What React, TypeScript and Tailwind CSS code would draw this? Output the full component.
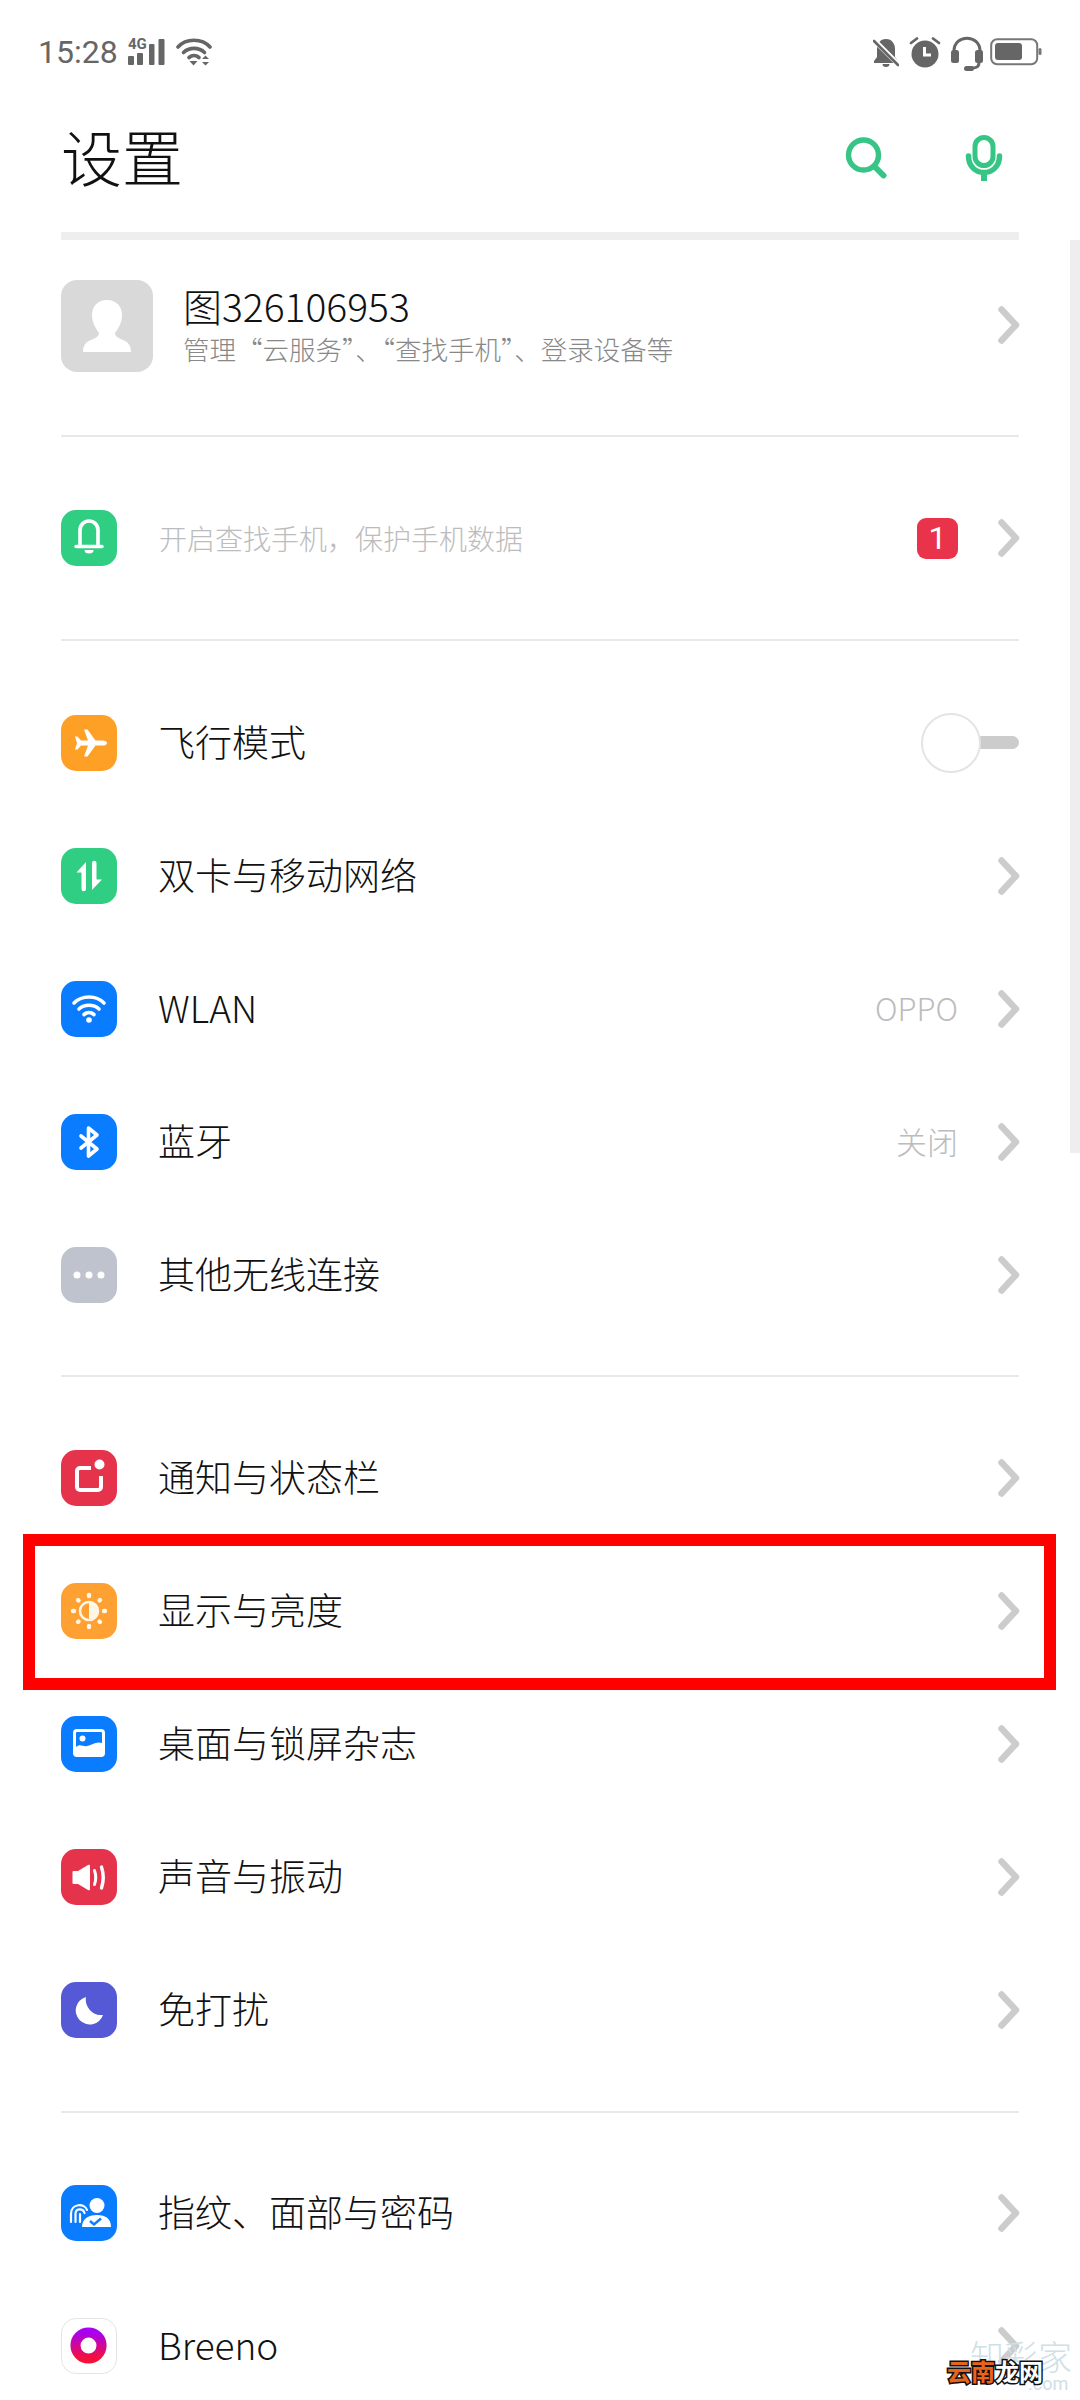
import React from "react";

const CJK = "font-['Noto_Sans_CJK_SC','Noto_Sans',sans-serif]";

function Chevron() {
  return (
    <svg width="22" height="38" viewBox="0 0 22 38" className="shrink-0 -mr-px">
      <path d="M3.5 3.5 L18 19 L3.5 34.5" fill="none" stroke="#cccccc" strokeWidth="6.5" strokeLinecap="round" strokeLinejoin="round" />
    </svg>
  );
}

function Box({ color, children, border }: { color: string; children: React.ReactNode; border?: boolean }) {
  return (
    <div
      className={`w-14 h-14 rounded-[15px] shrink-0 ${border ? "border border-[#e4e4e4]" : ""}`}
      style={{ backgroundColor: color }}
    >
      <svg width={border ? 54 : 56} height={border ? 54 : 56} viewBox="0 0 56 56" className="block">
        {children}
      </svg>
    </div>
  );
}

function Row({
  icon,
  label,
  value,
  toggle,
}: {
  icon: React.ReactNode;
  label: string;
  value?: string;
  toggle?: boolean;
}) {
  return (
    <div className="h-[133px] flex items-center">
      {icon}
      <div className="ml-[41px] pb-[3px] flex-1 text-[37px] leading-none text-[#111] font-light">{label}</div>
      {value ? <div className="mr-[40px] pb-[2px] text-[31px] leading-none text-[#bcbcbc] font-light">{value}</div> : null}
      {toggle ? (
        <div className="relative w-[98px] h-[60px] flex items-center justify-end">
          <div className="w-[50px] h-[13px] bg-[#cccccc] rounded-r-full" />
          <div className="absolute left-0 top-0 w-[60px] h-[60px] rounded-full bg-white border-2 border-[#e4e4e4]" />
        </div>
      ) : (
        <Chevron />
      )}
    </div>
  );
}

const W = "#ffffff";

export default function App() {
  return (
    <div className={`relative w-[1080px] h-[2400px] overflow-hidden bg-white ${CJK}`}>
      {/* status bar */}
      <div className="h-[104px] pl-[38px] pr-[38px] flex items-center justify-between">
        <div className="flex items-center">
          <span className="font-['Roboto',sans-serif] text-[32px] leading-[40px] text-[#666]">15:28</span>
          <svg width="38" height="28" viewBox="0 0 38 28" className="ml-[10px]">
            <text x="0" y="11" fontFamily="Roboto, sans-serif" fontWeight="700" fontSize="15" fill="#666">4G</text>
            <rect x="0" y="18" width="6" height="9" rx="1" fill="#666" />
            <rect x="9" y="15" width="6" height="12" rx="1" fill="#666" />
            <rect x="21" y="6" width="5.5" height="21" rx="1" fill="#666" />
            <rect x="30.5" y="1" width="6" height="26" rx="1" fill="#666" />
          </svg>
          <svg width="36" height="30" viewBox="0 0 36 30" className="ml-[10px]">
            <path d="M2 10 C10 1 26 1 34 10" fill="none" stroke="#666" strokeWidth="3.6" strokeLinecap="round" />
            <path d="M7.5 15.5 C13 10 23 10 28.5 15.5" fill="none" stroke="#666" strokeWidth="3.6" strokeLinecap="round" />
            <path d="M13 20.5 C16 18 20 18 23 20.5" fill="none" stroke="#666" strokeWidth="3.6" strokeLinecap="round" />
            <path d="M13.5 24 h8 l-4 4.5 Z" fill="#666" />
            <path d="M26 22 l3.5 -3.5 l3.5 3.5 Z M26 25 h7 l-3.5 3.5 Z" fill="#666" />
          </svg>
        </div>
        <div className="flex items-center">
          <svg width="26" height="32" viewBox="0 0 26 32">
            <path d="M13 3 C19 3 22 8 22 13 V21 L25 25 V27 H1 V25 L4 21 V13 C4 8 7 3 13 3 Z M9.5 28 h7 a3.5 3 0 0 1 -7 0 Z" fill="#666" />
            <path d="M1 4 L26 29" stroke="#fff" strokeWidth="5" />
            <path d="M1 5 L25 29" stroke="#666" strokeWidth="2.6" strokeLinecap="round" />
          </svg>
          <svg width="32" height="32" viewBox="0 0 32 32" className="ml-[10px]">
            <circle cx="16" cy="18" r="13.5" fill="#666" />
            <path d="M15.5 11 V19 H22" fill="none" stroke="#fff" strokeWidth="3" />
            <path d="M2 7 L8 2.5 M30 7 L24 2.5" stroke="#666" strokeWidth="2.8" strokeLinecap="round" />
          </svg>
          <svg width="34" height="38" viewBox="0 0 34 38" className="ml-[9px] mt-[4px]">
            <path d="M4 20 V16 C4 -1 30 -1 30 16 V20" fill="none" stroke="#666" strokeWidth="3" />
            <rect x="1" y="15" width="8" height="13" rx="2.5" fill="#666" />
            <rect x="25" y="15" width="8" height="13" rx="2.5" fill="#666" />
            <path d="M29 27 C29 32 27 33 21 33" fill="none" stroke="#666" strokeWidth="3" />
            <rect x="14" y="31" width="10" height="5" rx="2.5" fill="#666" />
          </svg>
          <svg width="52" height="28" viewBox="0 0 52 28" className="ml-[6px]">
            <rect x="1.2" y="1.2" width="46" height="25" rx="6" fill="none" stroke="#777" strokeWidth="2" />
            <rect x="5" y="5" width="27" height="17" rx="3" fill="#666" />
            <rect x="48.5" y="10" width="3" height="7" rx="1.5" fill="#777" />
          </svg>
        </div>
      </div>

      {/* header */}
      <div className="h-[128px] pb-[20px] pl-[61px] pr-[77px] flex items-center justify-between">
        <h1 className="text-[61px] leading-none font-light text-[#111] pb-[5px]">设置</h1>
        <div className="flex items-center gap-[78px]">
          <svg width="42" height="44" viewBox="0 0 42 44">
            <circle cx="18.5" cy="19" r="15" fill="none" stroke="#36c585" strokeWidth="5.4" />
            <path d="M30 31 L38.5 39.5" stroke="#36c585" strokeWidth="6" strokeLinecap="round" />
          </svg>
          <svg width="38" height="46" viewBox="0 0 38 46">
            <rect x="10" y="2.5" width="18" height="28" rx="9" fill="none" stroke="#36c585" strokeWidth="5" />
            <path d="M3.5 21 C3.5 43 34.5 43 34.5 21" fill="none" stroke="#36c585" strokeWidth="5.5" strokeLinecap="round" />
            <rect x="16" y="36" width="6" height="10" fill="#36c585" />
          </svg>
        </div>
      </div>

      <div className="ml-[61px] w-[958px]">
        <div className="h-2 bg-[#eeeeee]" />

        {/* account */}
        <div className="h-[195px] pt-[40px] flex items-start">
          <div className="w-[92px] h-[92px] rounded-[16px] bg-[#d9d9d9] shrink-0">
            <svg width="92" height="92" viewBox="-2 0 92 92" className="block">
              <path
                d="M44 20 C54 20 59 27 59 35 C59 44 54 50 52 53 C52 56 55 58 60 60 C65 62 68 65 68 72 H20 C20 65 23 62 28 60 C33 58 36 56 36 53 C34 50 29 44 29 35 C29 27 34 20 44 20 Z"
                fill="#fff"
              />
            </svg>
          </div>
          <div className="ml-[30px] flex-1 pt-[5px]">
            <div className="text-[39px] leading-[40px] font-light text-[#111]">图326106953</div>
            <div className="mt-[8px] text-[26.5px] leading-[32px] font-light text-[#888]">管理“云服务”、“查找手机”、登录设备等</div>
          </div>
          <div className="mt-[26px]">
            <Chevron />
          </div>
        </div>
        <div className="h-[2px] bg-[#e8e8e8]" />

        {/* reminder */}
        <div className="h-[202px] flex items-center">
          <Box color="#2fce83">
            <path d="M19 36 V20 a9 9 0 0 1 18 0 V36" fill="none" stroke={W} strokeWidth="3.6" />
            <path d="M15 36.5 H41" stroke={W} strokeWidth="3.4" strokeLinecap="round" />
            <path d="M23.5 40 h9 a4.5 3.5 0 0 1 -9 0 Z" fill={W} />
          </Box>
          <div className="ml-[42px] pb-[1px] flex-1 text-[28px] leading-none font-light text-[#bcbcbc]">开启查找手机，保护手机数据</div>
          <div className="w-[41px] h-[41px] rounded-[9px] bg-[#e8334a] text-white text-[32px] font-['Roboto',sans-serif] flex items-center justify-center mr-[40px]">1</div>
          <Chevron />
        </div>
        <div className="h-[2px] bg-[#e8e8e8]" />

        {/* connections */}
        <div className="pt-[35px] pb-[34px]">
          <Row
            label="飞行模式"
            toggle
            icon={
              <Box color="#ffa026">
                <path
                  d="M46 28 c0 1.5 -2 2.6 -4 2.6 H34.5 L26.5 41.5 h-3.5 L27 30.6 H20 L16.5 34.5 H14 L16 28 L14 21.5 H16.5 L20 25.4 H27 L23 14.5 h3.5 L34.5 25.4 H42 c2 0 4 1.1 4 2.6 Z"
                  fill={W}
                />
              </Box>
            }
          />
          <Row
            label="双卡与移动网络"
            icon={
              <Box color="#2fce83">
                <path d="M25 14 V41 a2 2 0 0 1 -4.5 0 V24.5 H15.5 Z" fill={W} />
                <path d="M31 42 V15 a2 2 0 0 1 4.5 0 V31.5 H41 Z" fill={W} />
              </Box>
            }
          />
          <Row
            label="WLAN"
            value="OPPO"
            icon={
              <Box color="#0a7cff">
                <path d="M13 22 C21 14 35 14 43 22" fill="none" stroke={W} strokeWidth="3.6" strokeLinecap="round" />
                <path d="M18 28 C23.5 23 32.5 23 38 28" fill="none" stroke={W} strokeWidth="3.6" strokeLinecap="round" />
                <path d="M23 33.5 C26 31 30 31 33 33.5" fill="none" stroke={W} strokeWidth="3.6" strokeLinecap="round" />
                <circle cx="28" cy="39" r="2.8" fill={W} />
              </Box>
            }
          />
          <Row
            label="蓝牙"
            value="关闭"
            icon={
              <Box color="#0a7cff">
                <path d="M20 22 L36 35 L27.5 42 V14 L36 21 L20 34" fill="none" stroke={W} strokeWidth="3.6" strokeLinecap="round" strokeLinejoin="round" />
              </Box>
            }
          />
          <Row
            label="其他无线连接"
            icon={
              <Box color="#bfc3cd">
                <circle cx="16" cy="28" r="3.5" fill={W} />
                <circle cx="28" cy="28" r="3.5" fill={W} />
                <circle cx="40" cy="28" r="3.5" fill={W} />
              </Box>
            }
          />
        </div>
        <div className="h-[2px] bg-[#e8e8e8]" />

        {/* device */}
        <div className="pt-[34px] pb-[35px]">
          <Row
            label="通知与状态栏"
            icon={
              <Box color="#e5334b">
                <path d="M30 18 H19 a3 3 0 0 0 -3 3 V37 a3 3 0 0 0 3 3 H37 a3 3 0 0 0 3 -3 V26" fill="none" stroke={W} strokeWidth="4" />
                <circle cx="38.5" cy="14.5" r="5" fill={W} />
              </Box>
            }
          />
          <Row
            label="显示与亮度"
            icon={
              <Box color="#ffa033">
                <circle cx="28" cy="28" r="9" fill="none" stroke="#fff6e5" strokeWidth="2.6" />
                <path d="M28 19 a9 9 0 0 1 0 18 Z" fill="#fff6e5" />
                <g stroke="#fff6e5" strokeWidth="4.4" strokeLinecap="round">
                  <path d="M28 12 V13" />
                  <path d="M28 43 V44" />
                  <path d="M12 28 H13" />
                  <path d="M43 28 H44" />
                  <path d="M17 17 L17.5 17.5" />
                  <path d="M39 17 L38.5 17.5" />
                  <path d="M17 39 L17.5 38.5" />
                  <path d="M39 39 L38.5 38.5" />
                </g>
              </Box>
            }
          />
          <Row
            label="桌面与锁屏杂志"
            icon={
              <Box color="#0a7cff">
                <rect x="12" y="13" width="32" height="28" rx="4" fill={W} />
                <path d="M15 17 a1 1 0 0 1 1 -1 H40 a1 1 0 0 1 1 1 V27 C35 25 31 29 26 30 C22 31 19 27 15 31 Z" fill="#0a7cff" />
                <circle cx="21.5" cy="22.5" r="3" fill={W} />
              </Box>
            }
          />
          <Row
            label="声音与振动"
            icon={
              <Box color="#e5334b">
                <path d="M11.5 23 a1 1 0 0 1 1 -1 H17 L27 16 a1.2 1.2 0 0 1 2 1 V40 a1.2 1.2 0 0 1 -2 1 L17 35 H12.5 a1 1 0 0 1 -1 -1 Z" fill={W} />
                <path d="M33.5 21.5 Q36 28.5 33.5 35.5" fill="none" stroke={W} strokeWidth="3" strokeLinecap="round" />
                <path d="M40.5 18 Q44 28.5 40.5 39" fill="none" stroke={W} strokeWidth="3.4" strokeLinecap="round" />
              </Box>
            }
          />
          <Row
            label="免打扰"
            icon={
              <Box color="#5659d6">
                <path d="M25 15 A14 14 0 1 0 42 33 A15.5 15.5 0 0 1 25 15 Z" fill={W} />
              </Box>
            }
          />
        </div>
        <div className="h-[2px] bg-[#e8e8e8]" />

        {/* security */}
        <div className="pt-[33px]">
          <Row
            label="指纹、面部与密码"
            icon={
              <Box color="#0a7cff">
                <circle cx="36" cy="20.5" r="7.5" fill={W} />
                <path d="M21 42 C21 34 27 30 36 30 C45 30 50 34 50 42 Z" fill={W} />
                <path d="M29 36 L33 39.5 L40 33.5" fill="none" stroke="#0a7cff" strokeWidth="2.4" />
                <g fill="none" stroke={W} strokeWidth="2.2" strokeLinecap="round">
                  <path d="M10 37 V29 C10 18 24 18 26 25" />
                  <path d="M14.5 37 V29 C14.5 23 22 23 23.5 28" />
                  <path d="M19 37 V29" />
                </g>
              </Box>
            }
          />
          <Row
            label="Breeno"
            icon={
              <Box color="#ffffff" border>
                <defs>
                  <linearGradient id="breeno" x1="0" y1="0" x2="0" y2="1">
                    <stop offset="0" stopColor="#a800f0" />
                    <stop offset="1" stopColor="#f5103a" />
                  </linearGradient>
                </defs>
                <circle cx="27.5" cy="27.5" r="13.5" fill="none" stroke="url(#breeno)" strokeWidth="10.5" />
              </Box>
            }
          />
        </div>
      </div>

      {/* scrollbar */}
      <div className="absolute left-[1070px] top-[240px] w-[10px] h-[913px] bg-[#eeeeee]" />

      {/* red highlight */}
      <div className="absolute left-[23px] top-[1534px] w-[1033px] h-[156px] border-[12px] border-[#fe0000]" />

      {/* watermarks */}
      <div className="absolute left-[970px] top-[2339px] text-[34px] leading-none font-light text-[#cfe0e6] whitespace-nowrap">知彩家</div>
      <div className="absolute left-[1028px] top-[2375px] text-[18px] leading-none font-['Roboto',sans-serif] text-[#cfe0e6]">.com</div>
      <div className="absolute left-[947px] top-[2358px] flex text-[24px] leading-[26px] font-bold whitespace-nowrap [-webkit-text-stroke:3px_#111] [paint-order:stroke_fill]">
        <span className="text-[#e8641a]">云南</span>
        <span className="text-white">龙网</span>
      </div>
    </div>
  );
}
